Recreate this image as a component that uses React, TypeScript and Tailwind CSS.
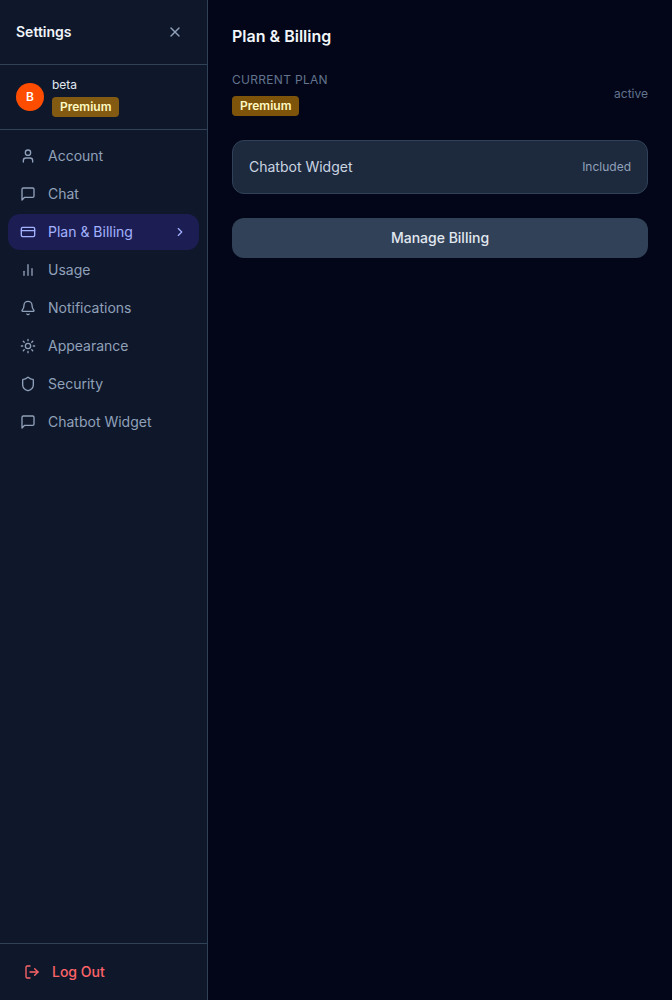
import type { ComponentType } from "react";
import { clsx } from "clsx";
import {
  Bell,
  ChevronRight,
  CreditCard,
  LogOut,
  Shield,
  User,
  X,
} from "lucide-react";
import { FiBarChart2, FiMessageSquare } from "react-icons/fi";

interface IconProps {
  className?: string;
}

interface NavItem {
  id: string;
  label: string;
  icon: ComponentType<IconProps>;
}

function SunIcon({ className }: IconProps) {
  return (
    <svg
      viewBox="0 0 24 24"
      fill="none"
      stroke="currentColor"
      strokeWidth="2"
      strokeLinecap="round"
      strokeLinejoin="round"
      className={className}
      aria-hidden="true"
    >
      <circle cx="12" cy="12" r="4" />
      <path d="M12 2v2M12 20v2M4.93 4.93l1.41 1.41M17.66 17.66l1.41 1.41M2 12h2M20 12h2M6.34 17.66l-1.41 1.41M19.07 4.93l-1.41 1.41" />
    </svg>
  );
}

const NAV_ITEMS: NavItem[] = [
  { id: "account", label: "Account", icon: User },
  { id: "chat", label: "Chat", icon: FiMessageSquare },
  { id: "billing", label: "Plan & Billing", icon: CreditCard },
  { id: "usage", label: "Usage", icon: FiBarChart2 },
  { id: "notifications", label: "Notifications", icon: Bell },
  { id: "appearance", label: "Appearance", icon: SunIcon },
  { id: "security", label: "Security", icon: Shield },
  { id: "widget", label: "Chatbot Widget", icon: FiMessageSquare },
];

function PlanBadge({ plan }: { plan: string }) {
  return (
    <span className="inline-flex rounded bg-yellow-600/60 px-2 py-0.5 text-xs font-semibold text-yellow-100">
      {plan}
    </span>
  );
}

function NavButton({ item, active }: { item: NavItem; active: boolean }) {
  const Icon = item.icon;
  return (
    <button
      type="button"
      aria-current={active ? "page" : undefined}
      className={clsx(
        "flex w-full items-center gap-3 rounded-xl px-3 py-2 text-left text-sm",
        active ? "bg-indigo-600/20 text-indigo-300" : "text-slate-400",
      )}
    >
      <Icon className="size-4 shrink-0" />
      <span className="flex-1">{item.label}</span>
      {active && <ChevronRight className="size-3.5" />}
    </button>
  );
}

function Sidebar({ activeId }: { activeId: string }) {
  return (
    <aside className="flex w-52 shrink-0 flex-col border-r border-slate-700 bg-slate-900">
      <div className="flex items-center justify-between border-b border-slate-700 p-4">
        <h1 className="text-sm font-semibold text-slate-100">Settings</h1>
        <button type="button" aria-label="Close settings" className="p-2 text-slate-400">
          <X className="size-4" />
        </button>
      </div>

      <div className="flex items-center gap-2 border-b border-slate-700 px-4 py-3">
        <div className="flex size-7 shrink-0 items-center justify-center rounded-full bg-[#ff4d00] text-xs font-semibold text-white">
          B
        </div>
        <div className="flex flex-col items-start gap-1">
          <span className="text-xs text-slate-200">beta</span>
          <PlanBadge plan="Premium" />
        </div>
      </div>

      <nav className="flex flex-1 flex-col gap-0.5 p-2">
        {NAV_ITEMS.map((item) => (
          <NavButton key={item.id} item={item} active={item.id === activeId} />
        ))}
      </nav>

      <div className="border-t border-slate-700 p-2">
        <button
          type="button"
          className="flex w-full items-center gap-3 px-4 py-2.5 text-sm font-medium text-red-400"
        >
          <LogOut className="size-4" />
          Log Out
        </button>
      </div>
    </aside>
  );
}

function BillingPanel() {
  return (
    <main className="flex min-w-0 flex-1 flex-col gap-6 p-6">
      <h2 className="text-base font-semibold text-slate-100">Plan &amp; Billing</h2>

      <div className="flex items-center justify-between">
        <div className="flex flex-col items-start gap-2">
          <span className="text-xs tracking-wide text-slate-500 uppercase">Current plan</span>
          <PlanBadge plan="Premium" />
        </div>
        <span className="text-xs text-slate-500">active</span>
      </div>

      <div className="flex items-center justify-between rounded-xl border border-slate-700 bg-slate-800 p-4">
        <span className="text-sm text-slate-300">Chatbot Widget</span>
        <span className="text-xs text-slate-400">Included</span>
      </div>

      <button
        type="button"
        className="w-full rounded-xl bg-slate-700 py-2.5 text-sm font-medium text-slate-200"
      >
        Manage Billing
      </button>
    </main>
  );
}

export default function App() {
  return (
    <div className="flex min-h-screen bg-slate-950 font-['Inter',sans-serif]">
      <Sidebar activeId="billing" />
      <BillingPanel />
    </div>
  );
}
